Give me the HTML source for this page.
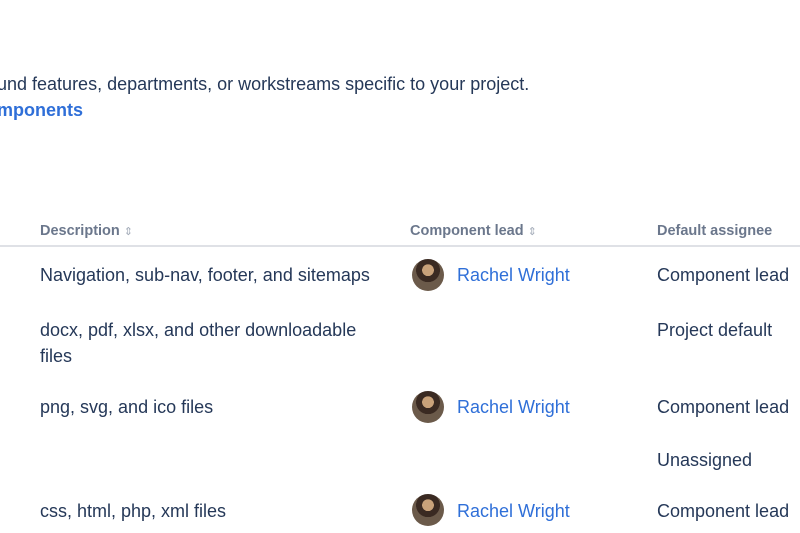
<!DOCTYPE html>
<html><head><meta charset="utf-8"><style>
body{margin:0;width:800px;height:533px;overflow:hidden;background:#fff;font-family:"Liberation Sans",sans-serif;color:#253858;position:relative}
.t{position:absolute;white-space:nowrap;font-size:18px;line-height:20px}
.h{position:absolute;white-space:nowrap;font-size:14.5px;font-weight:bold;color:#6b778c;line-height:18px}
.a{color:#2f6fd8}
.av{position:absolute;width:32px;height:32px;border-radius:50%;background:radial-gradient(circle at 50% 35%,#c9a27a 0 22%,#3a2a22 23% 45%,#6b5a4a 46%);}
.s{font-size:11px;color:#a5adba;font-weight:normal}
</style></head><body>
<div class="t" style="left:-3px;top:74px">und features, departments, or workstreams specific to your project.</div>
<div class="t a" style="left:-3px;top:100px;font-weight:bold">mponents</div>
<div class="h" style="left:40px;top:222px">Description <span class="s">⇕</span></div>
<div class="h" style="left:410px;top:222px">Component lead <span class="s">⇕</span></div>
<div class="h" style="left:657px;top:222px">Default assignee</div>
<div style="position:absolute;left:0;top:245px;width:800px;height:2px;background:#dfe1e6"></div>

<div class="t" style="left:40px;top:265px">Navigation, sub-nav, footer, and sitemaps</div>
<div class="av" style="left:412px;top:259px"></div>
<div class="t a" style="left:457px;top:265px">Rachel Wright</div>
<div class="t" style="left:657px;top:265px">Component lead</div>

<div class="t" style="left:40px;top:320px">docx, pdf, xlsx, and other downloadable</div>
<div class="t" style="left:40px;top:346px">files</div>
<div class="t" style="left:657px;top:320px">Project default</div>

<div class="t" style="left:40px;top:397px">png, svg, and ico files</div>
<div class="av" style="left:412px;top:391px"></div>
<div class="t a" style="left:457px;top:397px">Rachel Wright</div>
<div class="t" style="left:657px;top:397px">Component lead</div>

<div class="t" style="left:657px;top:450px">Unassigned</div>

<div class="t" style="left:40px;top:501px">css, html, php, xml files</div>
<div class="av" style="left:412px;top:494px"></div>
<div class="t a" style="left:457px;top:501px">Rachel Wright</div>
<div class="t" style="left:657px;top:501px">Component lead</div>
</body></html>
